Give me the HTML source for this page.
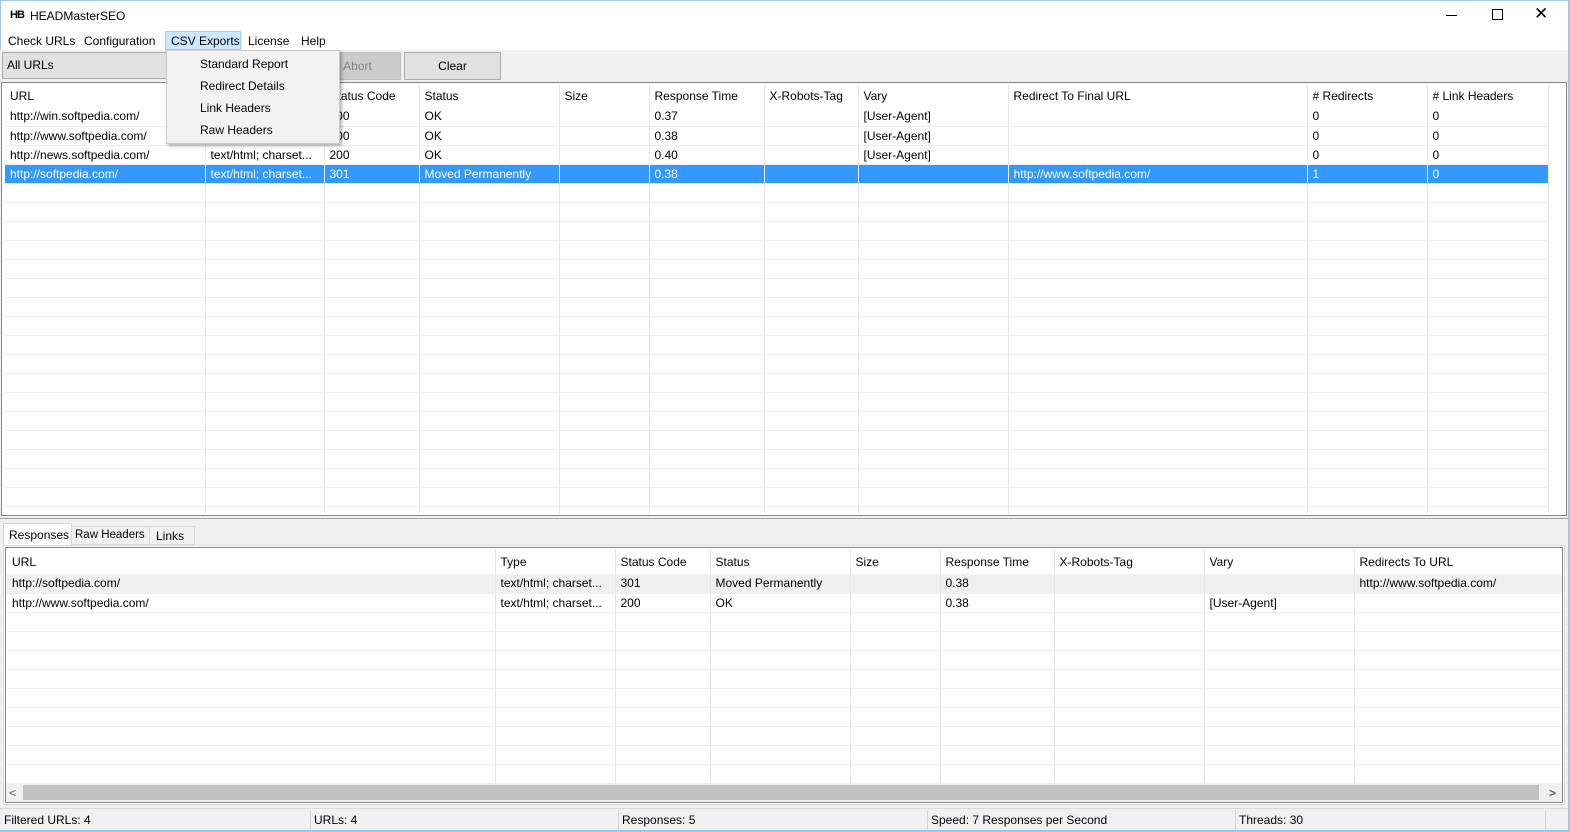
<!DOCTYPE html>
<html><head><style>
*{box-sizing:border-box;margin:0;padding:0}
body{width:1570px;height:832px;position:relative;overflow:hidden;background:#f0f0f0;font-family:"Liberation Sans",sans-serif;font-size:12px;color:#000}
.abs{position:absolute}
.clip{position:absolute;overflow:hidden;background:#fff}
table{border-collapse:collapse;table-layout:fixed;position:absolute;background:#fff}
td{border-right:1px solid #e6e6e6;border-bottom:1px solid #ececec;padding:0 0 0 5px;white-space:nowrap;overflow:hidden;height:19px;line-height:18px}
tr.h td{border-bottom:none;height:23px;line-height:22px}
tr.sel td{background:#3399ff;color:#fff;border-right-color:#e8f0ff}
tr.g td{background:#f0f0f0}
</style></head><body>
<div class="abs" style="left:0;top:0;width:1570px;height:50px;background:#fff;border:1px solid #9dc8ec;border-bottom:none"></div>
<div class="abs" style="left:10px;top:9px;font-weight:bold;font-size:11px;letter-spacing:-1px">HB</div>
<div class="abs" style="left:30px;top:9px">HEADMasterSEO</div>
<div class="abs" style="left:1446px;top:15px;width:11px;border-top:1px solid #000"></div>
<div class="abs" style="left:1492px;top:9px;width:11px;height:11px;border:1px solid #000"></div>
<div class="abs" style="left:1534px;top:4px;font-size:17px">✕</div>
<div class="abs" style="left:8px;top:34px">Check URLs</div>
<div class="abs" style="left:84px;top:34px">Configuration</div>
<div class="abs" style="left:165px;top:31px;width:76px;height:19px;background:#cce8ff;border:1px solid #99d1ff"></div>
<div class="abs" style="left:171px;top:34px;white-space:nowrap">CSV Exports</div>
<div class="abs" style="left:248px;top:34px">License</div>
<div class="abs" style="left:301px;top:34px">Help</div>
<div class="abs" style="left:0;top:50px;width:1568px;height:32px;background:#f0f0f0"></div>
<div class="abs" style="left:2px;top:52px;width:180px;height:27px;background:#e1e1e1;border:1px solid #adadad;padding:5px 4px">All URLs</div>
<div class="abs" style="left:314px;top:52px;width:87px;height:28px;background:#cccccc;border:1px solid #bfbfbf;color:#838383;text-align:center;line-height:26px">Abort</div>
<div class="abs" style="left:404px;top:52px;width:97px;height:28px;background:#e1e1e1;border:1px solid #adadad;text-align:center;line-height:26px">Clear</div>
<div class="abs" style="left:1px;top:82px;width:1566px;height:434px;background:#fff;border:1px solid #828790"></div>
<div class="clip" style="left:2px;top:83px;width:1564px;height:431px">
<table style="left:3px;top:1px;width:1543px">
<colgroup><col style="width:200px"><col style="width:119px"><col style="width:95px"><col style="width:140px"><col style="width:90px"><col style="width:115px"><col style="width:94px"><col style="width:150px"><col style="width:299px"><col style="width:120px"><col style="width:121px"></colgroup>
<tr class="h"><td>URL</td><td>Type</td><td>Status Code</td><td>Status</td><td>Size</td><td>Response Time</td><td>X-Robots-Tag</td><td>Vary</td><td>Redirect To Final URL</td><td># Redirects</td><td># Link Headers</td></tr>
<tr><td>http://win.softpedia.com/</td><td>text/html; charset...</td><td>200</td><td>OK</td><td></td><td>0.37</td><td></td><td>[User-Agent]</td><td></td><td>0</td><td>0</td></tr>
<tr><td>http://www.softpedia.com/</td><td>text/html; charset...</td><td>200</td><td>OK</td><td></td><td>0.38</td><td></td><td>[User-Agent]</td><td></td><td>0</td><td>0</td></tr>
<tr><td>http://news.softpedia.com/</td><td>text/html; charset...</td><td>200</td><td>OK</td><td></td><td>0.40</td><td></td><td>[User-Agent]</td><td></td><td>0</td><td>0</td></tr>
<tr class="sel"><td>http://softpedia.com/</td><td>text/html; charset...</td><td>301</td><td>Moved Permanently</td><td></td><td>0.38</td><td></td><td></td><td>http://www.softpedia.com/</td><td>1</td><td>0</td></tr>
<tr><td></td><td></td><td></td><td></td><td></td><td></td><td></td><td></td><td></td><td></td><td></td></tr>
<tr><td></td><td></td><td></td><td></td><td></td><td></td><td></td><td></td><td></td><td></td><td></td></tr>
<tr><td></td><td></td><td></td><td></td><td></td><td></td><td></td><td></td><td></td><td></td><td></td></tr>
<tr><td></td><td></td><td></td><td></td><td></td><td></td><td></td><td></td><td></td><td></td><td></td></tr>
<tr><td></td><td></td><td></td><td></td><td></td><td></td><td></td><td></td><td></td><td></td><td></td></tr>
<tr><td></td><td></td><td></td><td></td><td></td><td></td><td></td><td></td><td></td><td></td><td></td></tr>
<tr><td></td><td></td><td></td><td></td><td></td><td></td><td></td><td></td><td></td><td></td><td></td></tr>
<tr><td></td><td></td><td></td><td></td><td></td><td></td><td></td><td></td><td></td><td></td><td></td></tr>
<tr><td></td><td></td><td></td><td></td><td></td><td></td><td></td><td></td><td></td><td></td><td></td></tr>
<tr><td></td><td></td><td></td><td></td><td></td><td></td><td></td><td></td><td></td><td></td><td></td></tr>
<tr><td></td><td></td><td></td><td></td><td></td><td></td><td></td><td></td><td></td><td></td><td></td></tr>
<tr><td></td><td></td><td></td><td></td><td></td><td></td><td></td><td></td><td></td><td></td><td></td></tr>
<tr><td></td><td></td><td></td><td></td><td></td><td></td><td></td><td></td><td></td><td></td><td></td></tr>
<tr><td></td><td></td><td></td><td></td><td></td><td></td><td></td><td></td><td></td><td></td><td></td></tr>
<tr><td></td><td></td><td></td><td></td><td></td><td></td><td></td><td></td><td></td><td></td><td></td></tr>
<tr><td></td><td></td><td></td><td></td><td></td><td></td><td></td><td></td><td></td><td></td><td></td></tr>
<tr><td></td><td></td><td></td><td></td><td></td><td></td><td></td><td></td><td></td><td></td><td></td></tr>
<tr><td></td><td></td><td></td><td></td><td></td><td></td><td></td><td></td><td></td><td></td><td></td></tr>
</table>
</div>
<div class="abs" style="left:0;top:518px;width:1568px;height:2px;border-top:1px solid #a0a0a0"></div>
<div class="abs" style="left:3px;top:523px;width:69px;height:23px;background:#fff;border:1px solid #d9d9d9;border-bottom:none;padding:4px 5px;white-space:nowrap">Responses</div>
<div class="abs" style="left:71px;top:526px;width:79px;height:19px;background:#f0f0f0;border:1px solid #d9d9d9;padding:2px 3px;white-space:nowrap;font-size:11.5px">Raw Headers</div>
<div class="abs" style="left:149px;top:526px;width:46px;height:19px;background:#f0f0f0;border:1px solid #d9d9d9;padding:2px 6px">Links</div>
<div class="abs" style="left:3px;top:545px;width:1562px;height:260px;background:#fff;border:1px solid #d9d9d9"></div>
<div class="abs" style="left:5px;top:547px;width:1558px;height:256px;background:#fff;border:1px solid #828790"></div>
<div class="clip" style="left:6px;top:548px;width:1556px;height:235px">
<table style="left:1px;top:1px;width:1555px">
<colgroup><col style="width:488px"><col style="width:120px"><col style="width:95px"><col style="width:140px"><col style="width:90px"><col style="width:114px"><col style="width:150px"><col style="width:150px"><col style="width:208px"></colgroup>
<tr class="h"><td style="height:25px">URL</td><td>Type</td><td>Status Code</td><td>Status</td><td>Size</td><td>Response Time</td><td>X-Robots-Tag</td><td>Vary</td><td>Redirects To URL</td></tr>
<tr class="g"><td>http://softpedia.com/</td><td>text/html; charset...</td><td>301</td><td>Moved Permanently</td><td></td><td>0.38</td><td></td><td></td><td>http://www.softpedia.com/</td></tr>
<tr><td>http://www.softpedia.com/</td><td>text/html; charset...</td><td>200</td><td>OK</td><td></td><td>0.38</td><td></td><td>[User-Agent]</td><td></td></tr>
<tr><td></td><td></td><td></td><td></td><td></td><td></td><td></td><td></td><td></td></tr>
<tr><td></td><td></td><td></td><td></td><td></td><td></td><td></td><td></td><td></td></tr>
<tr><td></td><td></td><td></td><td></td><td></td><td></td><td></td><td></td><td></td></tr>
<tr><td></td><td></td><td></td><td></td><td></td><td></td><td></td><td></td><td></td></tr>
<tr><td></td><td></td><td></td><td></td><td></td><td></td><td></td><td></td><td></td></tr>
<tr><td></td><td></td><td></td><td></td><td></td><td></td><td></td><td></td><td></td></tr>
<tr><td></td><td></td><td></td><td></td><td></td><td></td><td></td><td></td><td></td></tr>
<tr><td></td><td></td><td></td><td></td><td></td><td></td><td></td><td></td><td></td></tr>
<tr><td></td><td></td><td></td><td></td><td></td><td></td><td></td><td></td><td></td></tr>
</table>
</div>
<div class="abs" style="left:6px;top:783px;width:1556px;height:19px;background:#f0f0f0"></div>
<div class="abs" style="left:9px;top:786px;font-size:12px;color:#606060">&lt;</div>
<div class="abs" style="left:23px;top:785px;width:1516px;height:15px;background:#c1c1c1"></div>
<div class="abs" style="left:1549px;top:786px;font-size:12px;color:#606060;font-weight:bold">&gt;</div>
<div class="abs" style="left:0;top:808px;width:1570px;height:24px;background:#f0f0f0;border-top:1px solid #dadada"></div>
<div class="abs" style="left:4px;top:813px">Filtered URLs: 4</div>
<div class="abs" style="left:310px;top:810px;height:22px;border-left:1px solid #d5d5d5"></div>
<div class="abs" style="left:314px;top:813px">URLs: 4</div>
<div class="abs" style="left:618px;top:810px;height:22px;border-left:1px solid #d5d5d5"></div>
<div class="abs" style="left:622px;top:813px">Responses: 5</div>
<div class="abs" style="left:927px;top:810px;height:22px;border-left:1px solid #d5d5d5"></div>
<div class="abs" style="left:931px;top:813px">Speed: 7 Responses per Second</div>
<div class="abs" style="left:1235px;top:810px;height:22px;border-left:1px solid #d5d5d5"></div>
<div class="abs" style="left:1239px;top:813px">Threads: 30</div>
<div class="abs" style="left:1545px;top:810px;height:22px;border-left:1px solid #d5d5d5"></div>
<div class="abs" style="left:1568px;top:0;width:2px;height:832px;background:#9dc8ec"></div>
<div class="abs" style="left:0;top:830px;width:1570px;height:2px;background:#9dc8ec"></div>
<div class="abs" style="left:166px;top:50px;width:174px;height:94px;background:#f2f2f2;border:1px solid #cccccc;box-shadow:2px 2px 3px rgba(0,0,0,0.3)"></div>
<div class="abs" style="left:200px;top:57px">Standard Report</div>
<div class="abs" style="left:200px;top:79px">Redirect Details</div>
<div class="abs" style="left:200px;top:101px">Link Headers</div>
<div class="abs" style="left:200px;top:123px">Raw Headers</div>
</body></html>
